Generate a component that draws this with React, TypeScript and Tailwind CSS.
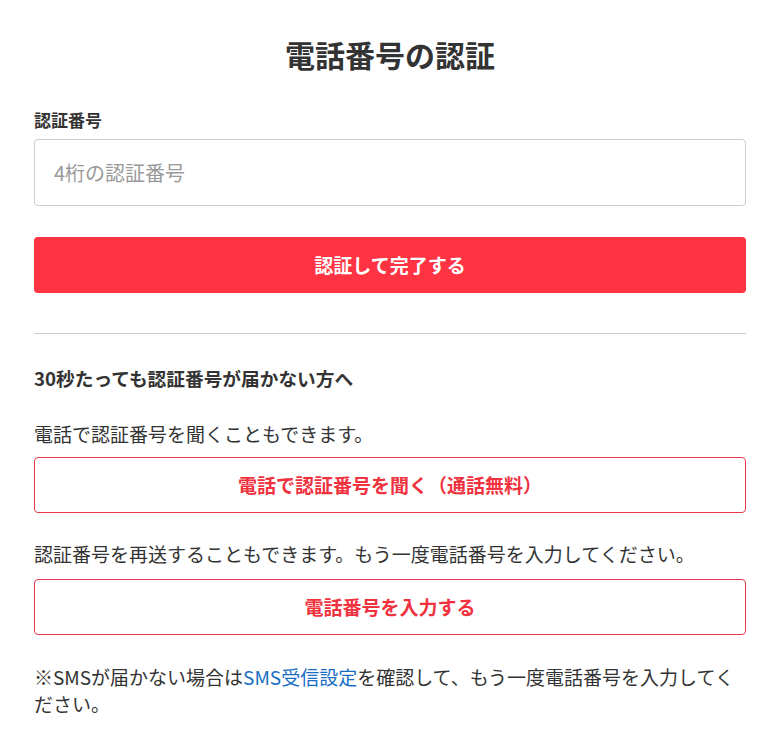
import React, { useState } from 'react';

export default function App() {
  const [code, setCode] = useState('');

  return (
    <div
      className="min-h-screen w-full bg-white text-[#333333]"
      style={{ fontFamily: '"Noto Sans CJK JP", "Noto Sans", sans-serif' }}
    >
      <div className="px-[34px] pt-[32px] pb-10">
        {/* タイトル */}
        <h1 className="text-center text-[30px] leading-[44px] font-bold">電話番号の認証</h1>

        {/* 認証番号入力 */}
        <label className="block mt-[32px] text-[17px] leading-[24px] font-bold">認証番号</label>
        <input
          value={code}
          onChange={(e) => setCode(e.target.value)}
          placeholder="4桁の認証番号"
          className="mt-[7px] block w-full h-[67px] border border-[#cccccc] rounded-[4px] px-[19px] text-[20px] outline-none placeholder:text-[#999999]"
        />

        <button className="mt-[31px] w-full h-[56px] rounded-[4px] bg-[#ff3341] text-white text-[19px] font-bold">
          認証して完了する
        </button>

        <div className="mt-[40px] h-px bg-[#cccccc]"></div>

        {/* 届かない方へ */}
        <h2 className="mt-[30px] text-[18.7px] leading-[27px] font-bold">30秒たっても認証番号が届かない方へ</h2>

        <p className="mt-[29px] text-[19px] leading-[27px]">電話で認証番号を聞くこともできます。</p>
        <button className="mt-[10px] w-full h-[56px] rounded-[4px] border border-[#e8384a] bg-white text-[#f0323f] text-[19px] font-bold">
          電話で認証番号を聞く（通話無料）
        </button>

        <p className="mt-[27px] text-[19px] leading-[27px]">認証番号を再送することもできます。もう一度電話番号を入力してください。</p>
        <button className="mt-[12px] w-full h-[56px] rounded-[4px] border border-[#e8384a] bg-white text-[#f0323f] text-[19px] font-bold">
          電話番号を入力する
        </button>

        <p className="mt-[28px] text-[19px] leading-[27px]">
          ※SMSが届かない場合は<a href="#" className="text-[#1a6fc4]">SMS受信設定</a>を確認して、もう一度電話番号を入力してください。
        </p>
      </div>
    </div>
  );
}
